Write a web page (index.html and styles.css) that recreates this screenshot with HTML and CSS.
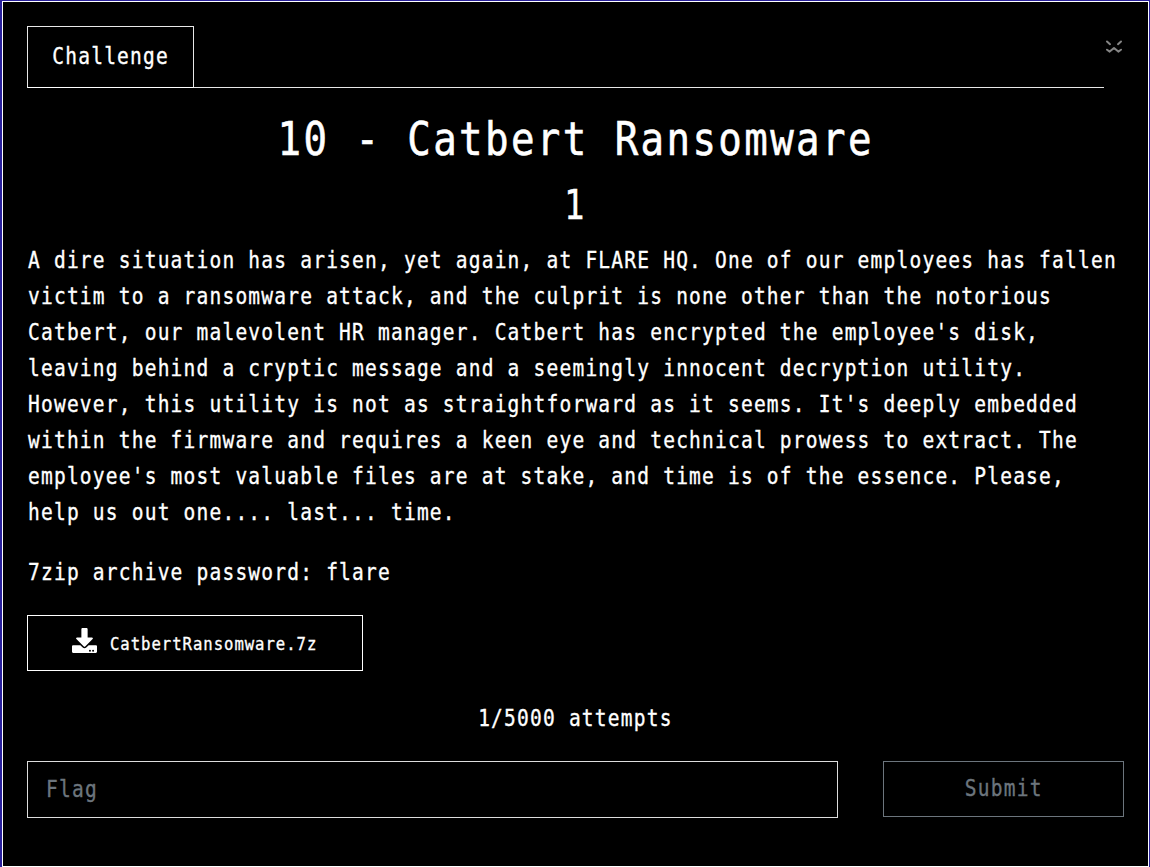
FILE: index.html
```html
<!DOCTYPE html>
<html lang="en">
<head>
<meta charset="utf-8">
<title>Challenge</title>
<link rel="stylesheet" href="styles.css">
</head>
<body>
<main class="panel">
  <header class="header">
    <nav class="tabs"><button class="tab"><span class="mono">Challenge</span></button></nav>
    <button class="close" aria-label="Close">
      <svg width="18" height="16" viewBox="0 0 18 16"><path d="M2 2.5l3 2.7M16 2.5l-3 2.7M2 10.7l2.7 1.9L9 9l4.3 3.6 2.7-1.9"/></svg>
    </button>
  </header>
  <h1 class="title"><span class="mono">10 - Catbert Ransomware</span></h1>
  <h2 class="points"><span class="mono">1</span></h2>
  <p class="description"><span class="mono">A dire situation has arisen, yet again, at FLARE HQ. One of our employees has fallen<br>victim to a ransomware attack, and the culprit is none other than the notorious<br>Catbert, our malevolent HR manager. Catbert has encrypted the employee's disk,<br>leaving behind a cryptic message and a seemingly innocent decryption utility.<br>However, this utility is not as straightforward as it seems. It's deeply embedded<br>within the firmware and requires a keen eye and technical prowess to extract. The<br>employee's most valuable files are at stake, and time is of the essence. Please,<br>help us out one.... last... time.</span></p>
  <p class="description"><span class="mono">7zip archive password: flare</span></p>
  <a class="file">
    <svg width="25" height="25" viewBox="0 0 512 512"><path fill="#fff" fill-rule="evenodd" d="M216 0h80c13 0 24 11 24 24v168h88c18 0 27 21 14 34L270 378c-7 7-20 7-28 0L90 226c-13-13-4-34 14-34h88V24c0-13 11-24 24-24zm296 376v112c0 13-11 24-24 24H24c-13 0-24-11-24-24V376c0-13 11-24 24-24h147l49 49c20 20 52 20 72 0l49-49h147c13 0 24 11 24 24zM388 464a20 20 0 1 0-40 0 20 20 0 0 0 40 0zm64 0a20 20 0 1 0-40 0 20 20 0 0 0 40 0z"/></svg>
    <span class="mono">CatbertRansomware.7z</span>
  </a>
  <p class="attempts"><span class="mono">1/5000 attempts</span></p>
  <form class="answer">
    <div class="flag"><span class="mono">Flag</span></div>
    <button class="submit" type="button"><span class="mono">Submit</span></button>
  </form>
</main>
</body>
</html>
```
FILE: styles.css
```css
* { box-sizing: border-box; }
body {
  margin: 0;
  padding: 1px 1px 0 2px;
  height: 867px;
  overflow: hidden;
  background: #2a219c;
  color: #fff;
  font: 23px/36px "DejaVu Sans Mono", monospace;
}
h1, h2, p { margin: 0; font-weight: normal; }
button { padding: 0; background: none; font: inherit; color: inherit; }
svg { display: block; flex: none; }
.panel {
  height: 866px;
  padding: 24px;
  border: 1px solid #fff;
  background: #000;
  overflow: hidden;
}
/* Narrow the glyphs while keeping an even, open pitch. */
.mono {
  display: inline-block;
  white-space: nowrap;
  letter-spacing: .061em;
  transform: scaleX(.85);
  -webkit-text-stroke: .35px currentColor;
}
.header { display: flex; justify-content: space-between; height: 62px; }
.tabs { width: 1077px; border-bottom: 1px solid #e8e8e8; }
.tab {
  display: flex;
  align-items: center;
  justify-content: center;
  width: 167px;
  height: 62px;
  padding-bottom: 2px;
  border: 1px solid #e8e8e8;
  border-bottom-color: #fff;
}
.close { width: 18px; height: 16px; margin: 13px 1px 0 0; border: 0; }
.close path { fill: none; stroke: #858585; stroke-width: 2; stroke-linecap: round; stroke-linejoin: round; }
.title { height: 84px; padding-top: 15px; text-align: center; font-size: 46px; line-height: 72px; }
.title .mono { -webkit-text-stroke-width: .6px; }
.points { height: 70px; text-align: center; font-size: 40px; line-height: 66px; }
.description { height: 288px; padding-left: .6px; }
.description + .description { height: 36px; margin-top: 24px; }
.description .mono { transform-origin: left; }
.file {
  display: flex;
  align-items: center;
  gap: 13px;
  width: 336px;
  height: 56px;
  margin-top: 25px;
  padding-left: 44px;
  border: 1px solid #fff;
  font-size: 18.4px;
}
.file svg { margin-top: -5px; }
.file .mono { padding-top: 2px; transform-origin: left; }
.attempts { margin-top: 29px; text-align: center; }
.answer { display: flex; justify-content: space-between; align-items: flex-start; margin-top: 25px; }
.flag { width: 811px; height: 57px; padding: 9px 18px; border: 1px solid #ddd; color: #6c757d; }
.flag .mono { transform-origin: left; }
.submit { width: 241px; height: 56px; padding-bottom: 2px; border: 1px solid #6c757d; color: #6c757d; }
```
